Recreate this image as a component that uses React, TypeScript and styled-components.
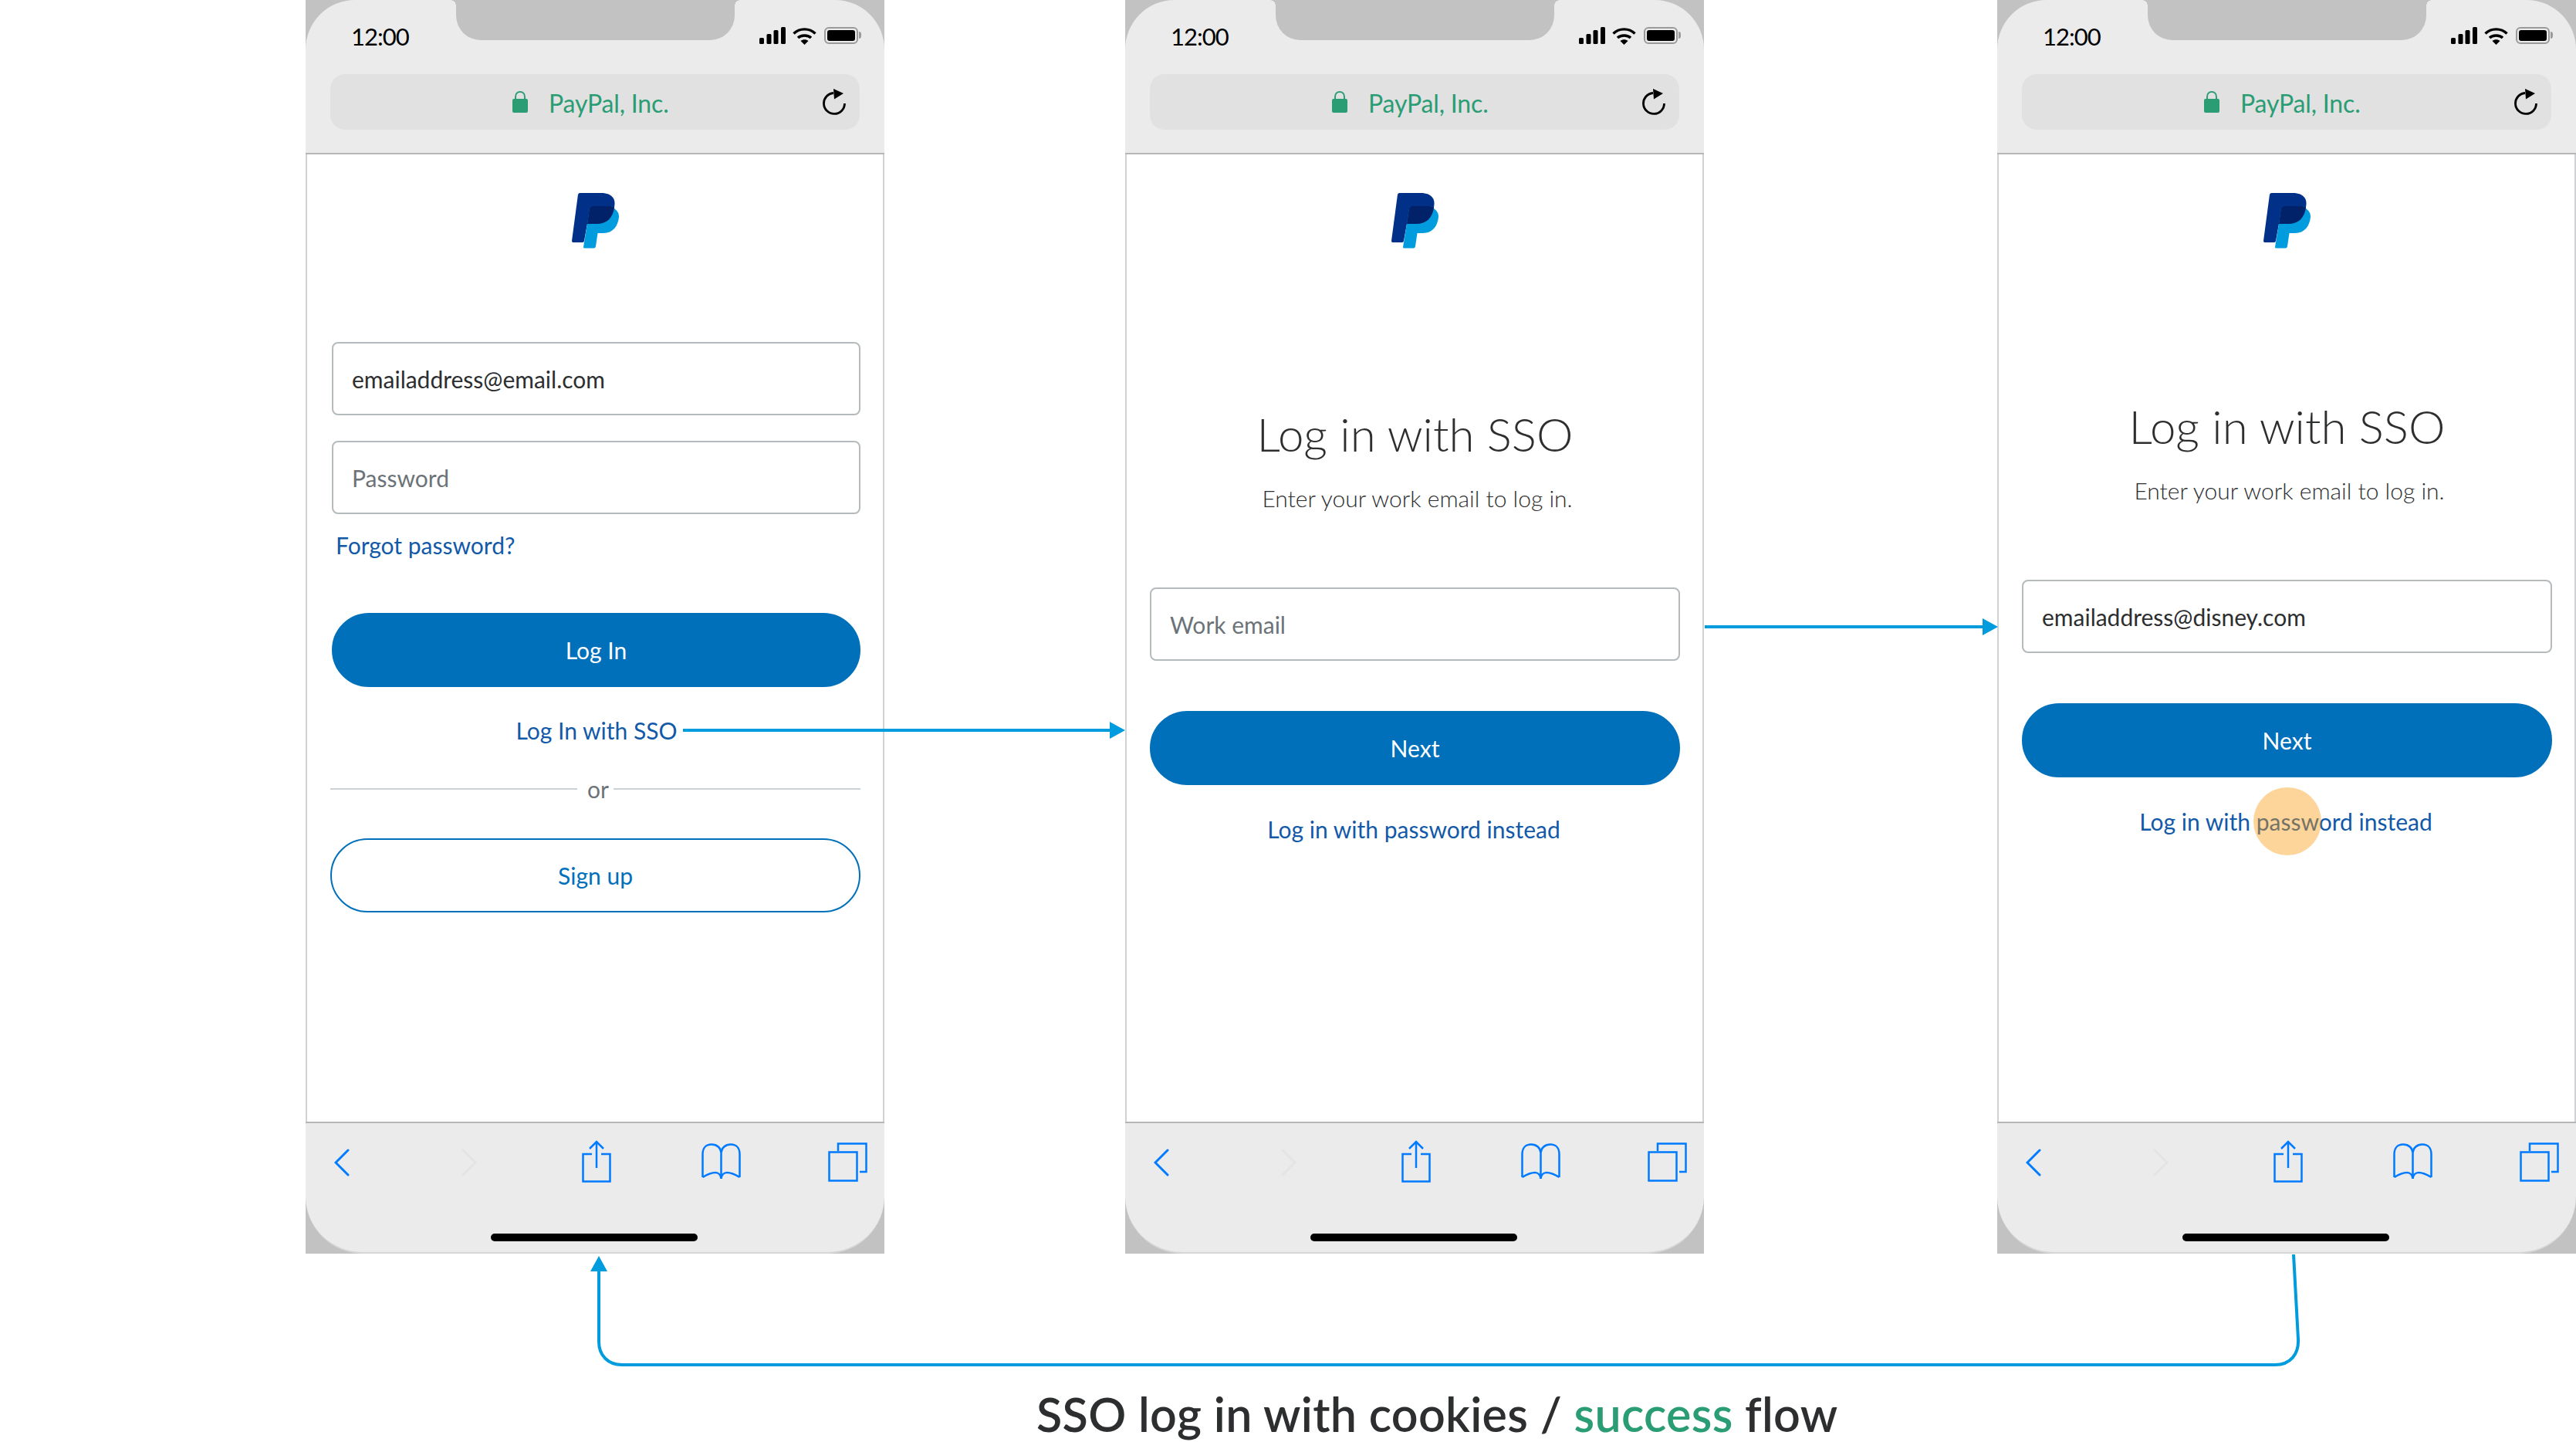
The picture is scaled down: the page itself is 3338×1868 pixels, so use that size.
import React from "react"
import styled, { createGlobalStyle } from "styled-components"

const Global = createGlobalStyle`
  html, body { margin: 0; padding: 0; background: #fff; }
  body { font-family: Lato, "Open Sans", sans-serif; }
`

const Stage = styled.div`
  position: relative;
  width: 3338px;
  height: 1868px;
  overflow: hidden;
  background: #fff;
`

const PhoneRow = styled.div`
  display: grid;
  grid-template-columns: 750px 750px 750px;
  column-gap: 312px;
  padding-left: 396px;
  & > :last-child { margin-left: 68px; }
`

const Phone = styled.div`
  display: flex;
  flex-direction: column;
  width: 750px;
  height: 1624px;
  background: #c2c2c2;
`

const Header = styled.header`
  position: relative;
  flex: none;
  height: 198px;
  background: #ebebeb;
  border-radius: 64px 64px 0 0;
  border-bottom: 2px solid #b4b6b8;
`

const Notch = styled.div`
  position: absolute;
  left: 195px;
  top: 0;
  width: 361px;
  height: 52px;
  background: #c2c2c2;
  border-radius: 0 0 32px 32px;
  &::before, &::after {
    content: "";
    position: absolute;
    top: 0;
    width: 7px;
    height: 7px;
  }
  &::before {
    left: -7px;
    background: radial-gradient(circle at 0 100%, #ebebeb 6.5px, #c2c2c2 7px);
  }
  &::after {
    right: -7px;
    background: radial-gradient(circle at 100% 100%, #ebebeb 6.5px, #c2c2c2 7px);
  }
`

const StatusBar = styled.div`
  display: flex;
  align-items: flex-start;
  justify-content: space-between;
  height: 96px;
  padding: 29px 29px 0 59px;
  box-sizing: border-box;
`

const Time = styled.span`
  font-size: 31px;
  line-height: 36px;
  letter-spacing: -1px;
  color: #000;
`

const StatusIcons = styled.div`
  display: flex;
  align-items: flex-start;
  gap: 9px;
  margin-top: 6px;
`

const Battery = styled.div`
  position: relative;
  width: 44px;
  height: 22px;
  box-sizing: border-box;
  border: 2px solid #9a9a9a;
  border-radius: 6px;
  padding: 2px;
  margin-left: 1px;
  margin-right: 5px;
  &::before {
    content: "";
    display: block;
    height: 100%;
    background: #000;
    border-radius: 3px;
  }
  &::after {
    content: "";
    position: absolute;
    right: -6px;
    top: 4px;
    width: 3px;
    height: 9px;
    background: #9a9a9a;
    border-radius: 0 3px 3px 0;
  }
`

const UrlBar = styled.div`
  display: flex;
  align-items: center;
  height: 72px;
  margin: 0 32px;
  padding: 0 18px 0 236px;
  box-sizing: border-box;
  background: #e1e1e1;
  border-radius: 19px;
`

const SiteName = styled.span`
  margin-left: 27px;
  padding-top: 2px;
  font-size: 32px;
  letter-spacing: -0.15px;
  color: #2a9d74;
`

const Reload = styled.svg`
  margin-left: auto;
`

const Body = styled.main`
  flex: 1;
  display: flex;
  flex-direction: column;
  padding: 50px 29px 0 30px;
  background: #fff;
  border-left: 2px solid #d0d3d5;
  border-right: 2px solid #d0d3d5;
  box-sizing: border-box;
`

const Logo = styled.svg`
  flex: none;
  align-self: center;
`

const Title = styled.h1<{ $top: number }>`
  margin: ${(p) => p.$top}px 0 0;
  text-align: center;
  font-size: 60px;
  line-height: 72px;
  font-weight: 300;
  color: #2c2e2f;
`

const Subtitle = styled.p`
  margin: 29px 0 0;
  padding-left: 6px;
  text-align: center;
  font-size: 30px;
  line-height: 36px;
  font-weight: 300;
  color: #2c2e2f;
`

const Field = styled.div<{ $top: number; $placeholder?: boolean; $inset?: boolean }>`
  display: flex;
  align-items: center;
  height: 95px;
  margin-top: ${(p) => p.$top}px;
  margin-left: ${(p) => (p.$inset ? "2px" : "0")};
  padding-left: 24px;
  box-sizing: border-box;
  border: 2px solid #b5babd;
  border-radius: 8px;
  font-size: 30px;
  color: ${(p) => (p.$placeholder ? "#6c7378" : "#2c2e2f")};
`

const TextLink = styled.div<{ $top: number; $left?: boolean; $shift?: number; $nudge?: number }>`
  position: relative;
  margin-top: ${(p) => p.$top}px;
  padding-left: ${(p) => (p.$left ? 7 : p.$nudge ?? 0)}px;
  padding-right: ${(p) => p.$shift ?? 0}px;
  text-align: ${(p) => (p.$left ? "left" : "center")};
  font-size: 30px;
  line-height: 36px;
  color: #1259a8;
`

const Tap = styled.span`
  position: absolute;
  left: 50%;
  top: 50%;
  width: 88px;
  height: 88px;
  transform: translate(-50%, -50%);
  border-radius: 50%;
  background: rgba(250, 152, 14, 0.42);
`

const PillButton = styled.div<{ $top: number; $outline?: boolean; $inset?: boolean }>`
  display: flex;
  align-items: center;
  justify-content: center;
  height: 96px;
  margin-top: ${(p) => p.$top}px;
  margin-left: ${(p) => (p.$inset ? "2px" : "0")};
  box-sizing: border-box;
  border-radius: 48px;
  border: ${(p) => (p.$outline ? "2px" : "3px")} solid #0070ba;
  background: ${(p) => (p.$outline ? "#fff" : "#0070ba")};
  color: ${(p) => (p.$outline ? "#0070ba" : "#fff")};
  font-size: 30px;
`

const Divider = styled.div`
  display: flex;
  align-items: center;
  gap: 6px;
  height: 36px;
  margin-top: 40px;
  font-size: 30px;
  color: #6c7378;
  &::before, &::after {
    content: "";
    flex: 1;
    height: 2px;
    background: #cbd2d6;
  }
  &::before { flex: 0 0 320px; margin-right: 7px; }
`

const Toolbar = styled.footer`
  flex: none;
  position: relative;
  display: flex;
  align-items: flex-start;
  height: 171px;
  box-sizing: border-box;
  background: #ebebeb;
  border-top: 2px solid #b4b6b8;
  border-bottom: 2px solid #d4d6d8;
  border-radius: 0 0 74px 74px;
`

const ToolIcon = styled.svg<{ $gap: number; $top: number; $muted?: boolean; $heavy?: boolean }>`
  flex: none;
  margin-left: ${(p) => p.$gap}px;
  margin-top: ${(p) => p.$top}px;
  fill: none;
  stroke: ${(p) => (p.$muted ? "#e4e4e4" : "#007aff")};
  stroke-width: ${(p) => (p.$heavy ? 3 : 2.5)};
  stroke-linecap: ${(p) => (p.$heavy ? "round" : "butt")};
`

const HomeBar = styled.div`
  position: absolute;
  left: 240px;
  top: 143px;
  width: 268px;
  height: 10px;
  border-radius: 5px;
  background: #000;
`

const Caption = styled.h2`
  margin: 174px 0 0;
  padding-left: 1343px;
  font-size: 61px;
  line-height: 68px;
  letter-spacing: 0.3px;
  font-weight: 600;
  color: #2c2e2f;
  white-space: nowrap;
`

const Success = styled.span`
  color: #2a9d74;
`

const Arrows = styled.svg`
  position: absolute;
  left: 0;
  top: 0;
  pointer-events: none;
`

function Chrome({ children }: { children: React.ReactNode }) {
  return (
    <Phone>
      <Header>
        <Notch />
        <StatusBar>
          <Time>12:00</Time>
          <StatusIcons>
            <svg width="34" height="22" viewBox="0 0 34 22" fill="#000">
              <rect x="0" y="14" width="6" height="8" rx="1.5" />
              <rect x="9.5" y="9" width="6" height="13" rx="1.5" />
              <rect x="18.5" y="4" width="6" height="18" rx="1.5" />
              <rect x="28" y="0" width="6" height="22" rx="1.5" />
            </svg>
            <svg width="31" height="23" viewBox="0 0 31 23" fill="none" stroke="#000" strokeWidth="3.4">
              <path d="M1.5 8.5C9 1 22 1 29.5 8.5" />
              <path d="M7 14C11 10 20 10 24 14" />
              <path d="M10.5 18C13.5 15.6 17.5 15.6 20.5 18L15.5 23Z" fill="#000" stroke="none" />
            </svg>
            <Battery />
          </StatusIcons>
        </StatusBar>
        <UrlBar>
          <svg width="20" height="28" viewBox="0 0 20 28">
            <path d="M4 11V7.5C4 3.5 6.5 1 10 1s6 2.500 6 6.500V11" fill="none" stroke="#2a9d74" strokeWidth="2" />
            <rect x="0" y="10" width="20" height="18" rx="2" fill="#2a9d74" />
          </svg>
          <SiteName>PayPal, Inc.</SiteName>
          <Reload width="30" height="34" viewBox="0 0 30 34">
            <path d="M14 5.500A13.500 13.500 0 1 0 28.500 19" fill="none" stroke="#000" strokeWidth="2.800" />
            <path d="M14 0L27 6L15 13.500Z" fill="#000" />
          </Reload>
        </UrlBar>
      </Header>
      <Body>
        <Logo width="61" height="72" viewBox="0 0 61 72">
          <path d="M10.500 0H38C50 0 56 6 55.500 14C54.500 30 46 40 32 40H20L16 62Q15.700 64 14 64H1.500Q0 64 0 62L8 2Q8.500 0 10.500 0Z" fill="#003087" />
          <path d="M26 17H50C53 17 54 18 55 20C59 23 61 26 61 31C60 43 53 52 41 52H33.500L31 69Q30.500 71.500 28.500 71.500H16.500Q15 71.500 15 70L20 40L23 19Q23.500 17 26 17Z" fill="#009cde" />
          <path d="M26 17H50C52 17 54 18 55 19C53 32 46 40 32 40H20L23 19Q23.500 17 26 17Z" fill="#012169" />
        </Logo>
        {children}
      </Body>
      <Toolbar>
        <ToolIcon $heavy $gap={37} $top={33} width="20" height="36" viewBox="0 0 20 36">
          <path d="M18 2L2 18L18 34" />
        </ToolIcon>
        <ToolIcon $heavy $muted $gap={145} $top={33} width="20" height="36" viewBox="0 0 20 36">
          <path d="M2 2L18 18L2 34" />
        </ToolIcon>
        <ToolIcon $gap={136} $top={22} width="38" height="55" viewBox="0 0 38 55">
          <path d="M13 18H1.500V53.500H36.500V18H25" />
          <path d="M19 1.500V36M10 11L19 2L28 11" />
        </ToolIcon>
        <ToolIcon $gap={117} $top={26} width="51" height="48" viewBox="0 0 51 48">
          <path d="M1.500 44V14C1.500 6 6 1.500 13 1.500C20 1.500 25 6 25.500 12V46" />
          <path d="M25.500 12C26 6 31 1.500 38 1.500C45 1.500 49.500 6 49.500 14V44" />
          <path d="M1.500 44C8 40 14 38 18 38C22 38 25 41 25.500 46C26 41 29 38 33 38C37 38 43 40 49.500 44" />
        </ToolIcon>
        <ToolIcon $gap={113} $top={25} width="51" height="51" viewBox="0 0 51 51">
          <rect x="1.500" y="12.500" width="36" height="37" />
          <path d="M13 11V1.500H49.500V38H41" />
        </ToolIcon>
        <HomeBar />
      </Toolbar>
    </Phone>
  )
}

function SsoForm({ top, email, tapped }: { top: number; email: string; tapped?: boolean }) {
  return (
    <>
      <Title $top={top}>Log in with SSO</Title>
      <Subtitle>Enter your work email to log in.</Subtitle>
      <Field $top={98} $placeholder={email === "Work email"}>{email}</Field>
      <PillButton $top={65}>Next</PillButton>
      <TextLink $top={39} $shift={3}>
        Log in with password instead
        {tapped && <Tap />}
      </TextLink>
    </>
  )
}

export default function App() {
  return (
    <Stage>
      <Global />
      <PhoneRow>
        <Chrome>
          <Field $inset $top={121}>emailaddress@email.com</Field>
          <Field $inset $top={33} $placeholder>Password</Field>
          <TextLink $top={22} $left>Forgot password?</TextLink>
          <PillButton $inset $top={70}>Log In</PillButton>
          <TextLink $top={38} $nudge={3}>Log In with SSO</TextLink>
          <Divider>or</Divider>
          <PillButton $top={46} $outline>Sign up</PillButton>
        </Chrome>
        <Chrome>
          <SsoForm top={204} email="Work email" />
        </Chrome>
        <Chrome>
          <SsoForm top={194} email="emailaddress@disney.com" tapped />
        </Chrome>
      </PhoneRow>
      <Caption>
        SSO log in with cookies / <Success>success</Success> flow
      </Caption>
      <Arrows width="3338" height="1868" viewBox="0 0 3338 1868" fill="none" stroke="#009cde" strokeWidth="4">
        <path d="M885 946H1442" />
        <path d="M1458 946L1438 935V957Z" fill="#009cde" stroke="none" />
        <path d="M2209 812H2570" />
        <path d="M2589 812L2569 801V823Z" fill="#009cde" stroke="none" />
        <path d="M2972 1625L2978 1735C2979 1754 2968 1768 2948 1768H806C788 1768 776 1756 776 1738V1644" />
        <path d="M776 1627L765 1647H787Z" fill="#009cde" stroke="none" />
      </Arrows>
    </Stage>
  )
}
